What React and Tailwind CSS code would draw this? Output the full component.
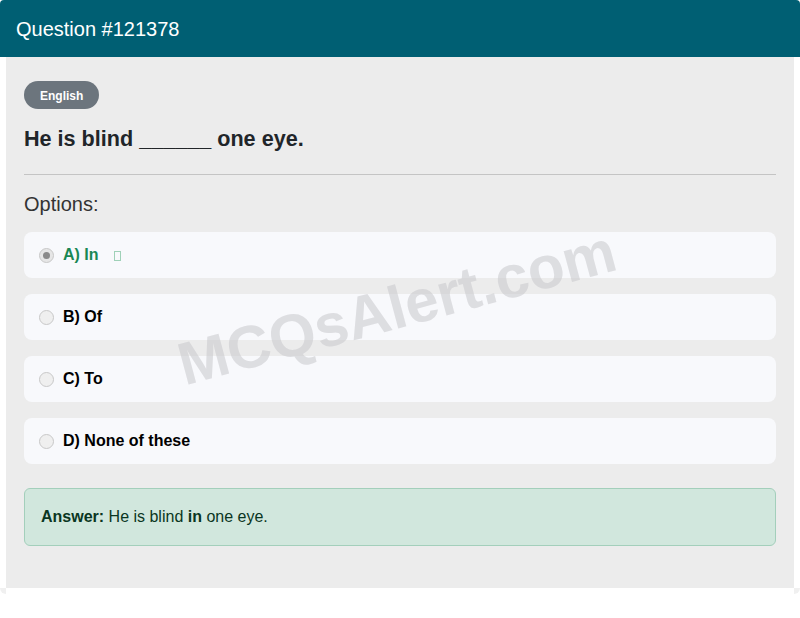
export default function App() {
  const opts = [
    { l: "A) In", sel: true },
    { l: "B) Of" },
    { l: "C) To" },
    { l: "D) None of these" },
  ];
  return (
    <div className="w-[800px] h-[618px] bg-white relative overflow-hidden" style={{ fontFamily: '"Liberation Sans", Arial, sans-serif' }}>
      <div className="h-[57px] bg-[#005f73] rounded-t-[4px] flex items-center px-4">
        <span className="text-white text-[20px]">Question #121378</span>
      </div>
      <div className="mx-[6px] bg-[#ececec] h-[531px] px-[18px] pt-[24px] relative">
        <span className="inline-flex items-center h-[28px] pt-px px-4 rounded-full bg-[#6c757d] text-white text-[12px] font-bold">English</span>
        <h1 className="mt-[17px] text-[21.6px] font-bold text-[#212529] leading-[26px]">He is blind ______ one eye.</h1>
        <div className="mt-[22px] h-px bg-[#c4c4c4]"></div>
        <div className="mt-[17px] text-[20px] text-[#333] leading-[24px]">Options:</div>
        <div className="mt-[16px] flex flex-col gap-[16px]">
          {opts.map((o) => (
            <div key={o.l} className="h-[46px] bg-[#f8f9fc] rounded-[8px] flex items-center px-[15px]">
              <span className={"w-[15px] h-[15px] rounded-full border border-[#c8c8c8] flex items-center justify-center " + (o.sel ? "bg-[#e6e6e6]" : "bg-[#efefef]")}>
                {o.sel && <span className="w-[7px] h-[7px] rounded-full bg-[#8a8a8a]"></span>}
              </span>
              <span className={"ml-[9px] text-[16px] font-bold " + (o.sel ? "text-[#198754]" : "text-black")}>{o.l}</span>
              {o.sel && <span className="ml-[15px] w-[7px] h-[10px] border border-[#9fd1b8] mt-[2px]"></span>}
            </div>
          ))}
        </div>
        <div className="mt-[24px] h-[58px] bg-[#d1e7dd] border border-[#a3cfbb] rounded-[6px] flex items-center px-[16px] text-[16px] text-[#0a3622]">
          <span><b>Answer:</b> He is blind <b>in</b> one eye.</span>
        </div>
        <div className="absolute left-0 top-0 w-full h-full pointer-events-none flex items-center justify-center">
          <span className="text-[60px] font-bold text-[#c8c8cc] opacity-55 -rotate-[15deg] -translate-x-[3px] -translate-y-[15px] whitespace-nowrap">MCQsAlert.com</span>
        </div>
      </div>
      <div className="flex justify-between h-[6px]">
        <div className="w-[6px] h-[6px] bg-[#f0f0f0] rounded-bl-[6px]"></div>
        <div className="w-[6px] h-[6px] bg-[#f0f0f0] rounded-br-[6px]"></div>
      </div>
    </div>
  );
}
